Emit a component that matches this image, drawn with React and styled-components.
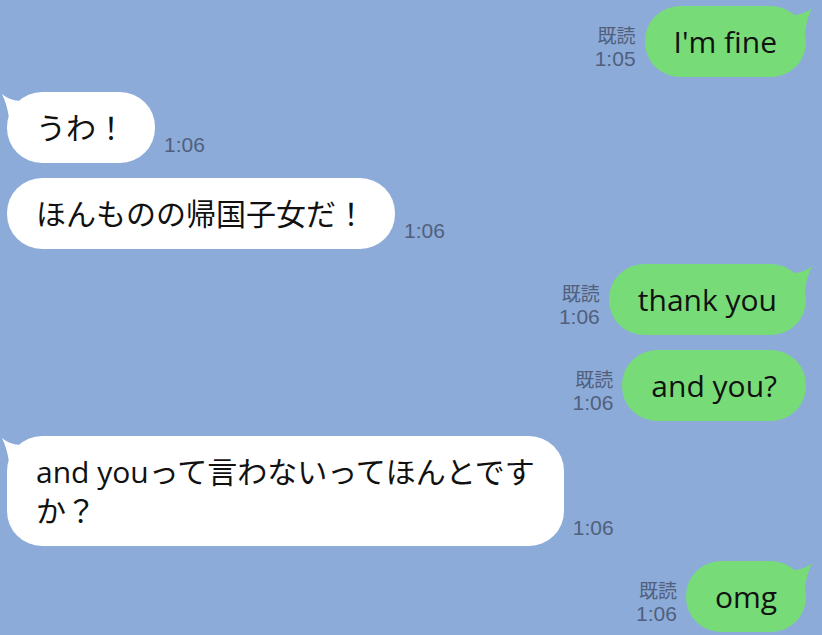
import React from 'react'
import styled, { createGlobalStyle } from 'styled-components'

const GlobalStyle = createGlobalStyle`
    body{
        margin:0;
        background:#8cabd9;
    }
`

const Chat = styled.div`
    display:flex;
    flex-direction:column;
    gap:15px;
    width:822px;
    height:635px;
    box-sizing:border-box;
    padding:6px 16px 0 7px;
    overflow:hidden;
    background:#8cabd9;
    font-family:"Open Sans", "Noto Sans CJK JP", sans-serif;
`

const Row = styled.div`
    display:flex;
    flex-direction:row;
    align-items:flex-end;
    justify-content:${p => p.$mine ? 'flex-end' : 'flex-start'};
    gap:9px;
`

const Bubble = styled.div`
    position:relative;
    background:${p => p.$mine ? '#77dc77' : '#ffffff'};
    color:#111;
    font-size:30px;
    line-height:39px;
    padding:16px 29px;
    border-radius:35px;
    white-space:pre-line;
`

const Tail = styled.svg`
    position:absolute;
    top:0;
    ${p => p.$mine ? 'right:-8px;' : 'left:-7px;'}
    width:22px;
    height:26px;
`

const Meta = styled.div`
    display:flex;
    flex-direction:column;
    align-items:${p => p.$mine ? 'flex-end' : 'flex-start'};
    color:#50607c;
    margin-bottom:6px;
`

const ReadMark = styled.span`
    font-family:"Noto Sans CJK JP", sans-serif;
    font-size:19px;
    line-height:22px;
    margin-bottom:1px;
`

const Time = styled.span`
    font-family:"Liberation Sans", Arial, sans-serif;
    font-size:21px;
    line-height:24px;
`

const messages = [
    { mine: true, text: "I'm fine", time: '1:05', tail: true },
    { mine: false, text: 'うわ！', time: '1:06', tail: true },
    { mine: false, text: 'ほんものの帰国子女だ！', time: '1:06' },
    { mine: true, text: 'thank you', time: '1:06', tail: true },
    { mine: true, text: 'and you?', time: '1:06' },
    { mine: false, text: 'and youって言わないってほんとです\nか？', time: '1:06', tail: true },
    { mine: true, text: 'omg', time: '1:06', tail: true },
]

function BubbleTail({ mine }) {
    const d = mine
        ? 'M1 9 Q12 9 20 2 Q15 12 13 26 L1 26 Z'
        : 'M21 9 Q10 9 2 2 Q7 12 9 26 L21 26 Z'
    return (
        <Tail $mine={mine} viewBox="0 0 22 26">
            <path d={d} fill={mine ? '#77dc77' : '#ffffff'} />
        </Tail>
    )
}

export default function App() {
    return (
        <>
            <GlobalStyle />
            <Chat>
                {messages.map((m, i) => (
                    <Row key={i} $mine={m.mine}>
                        {m.mine && (
                            <Meta $mine>
                                <ReadMark>既読</ReadMark>
                                <Time>{m.time}</Time>
                            </Meta>
                        )}
                        <Bubble $mine={m.mine}>
                            {m.tail && <BubbleTail mine={m.mine} />}
                            {m.text}
                        </Bubble>
                        {!m.mine && (
                            <Meta>
                                <Time>{m.time}</Time>
                            </Meta>
                        )}
                    </Row>
                ))}
            </Chat>
        </>
    )
}
